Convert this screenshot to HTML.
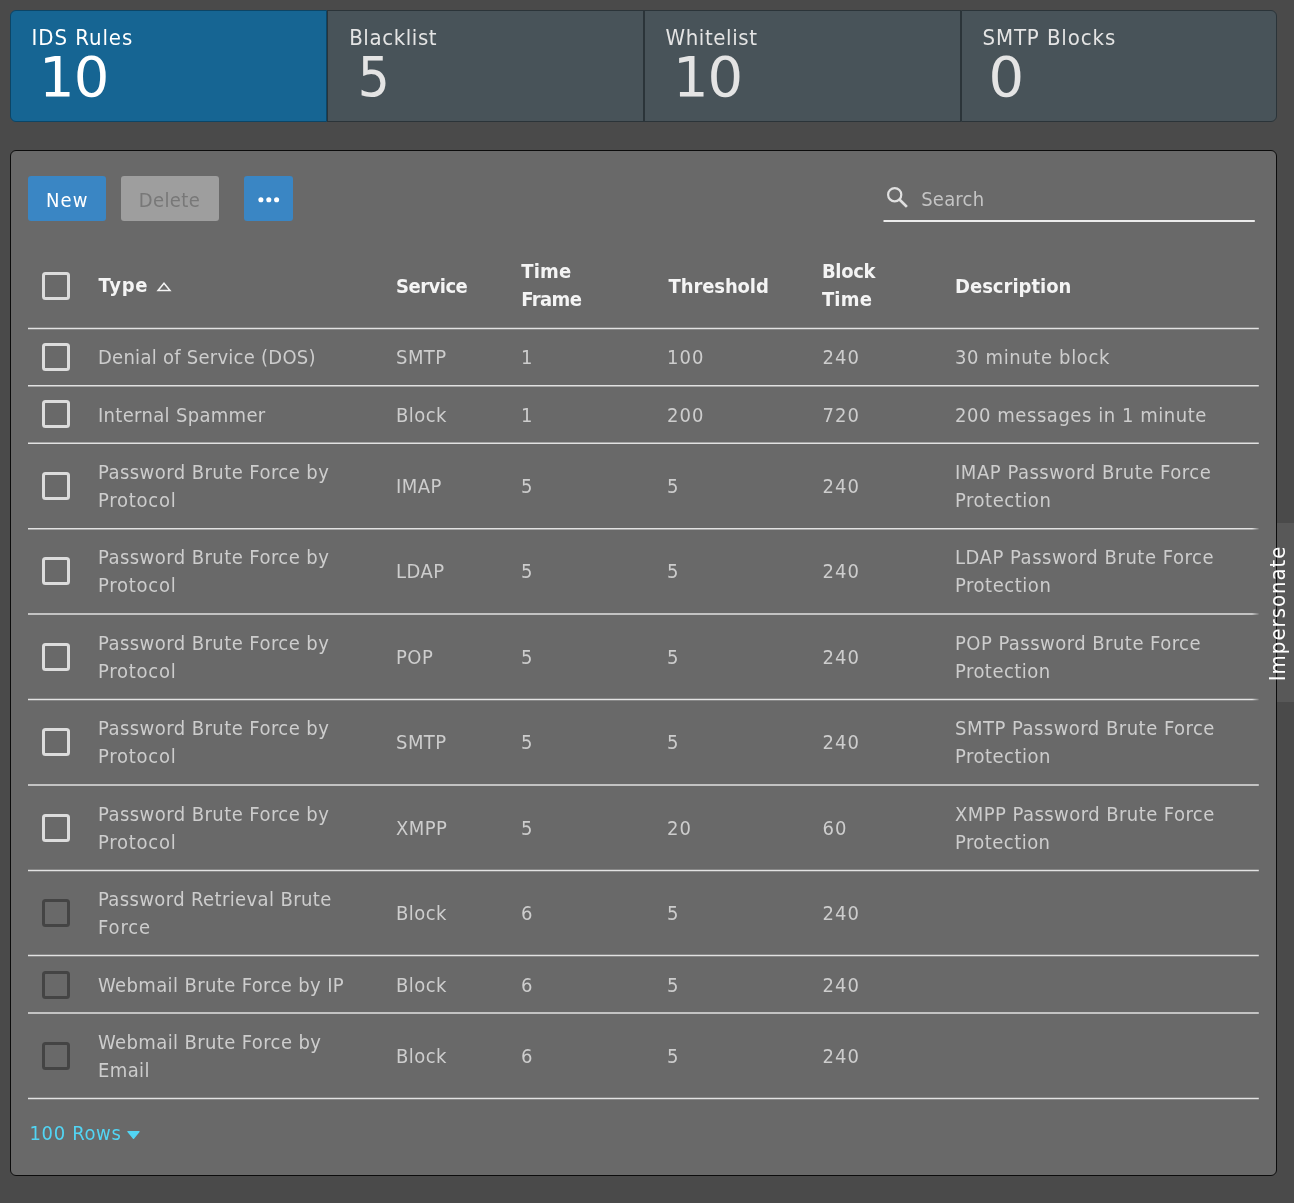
<!DOCTYPE html>
<html lang="en">
<head>
<meta charset="utf-8">
<title>IDS Rules</title>
<style>
*{box-sizing:border-box;margin:0;padding:0}
html,body{width:1294px;height:1203px;overflow:hidden;background:#4a4a4a}
body{position:relative;font-family:"DejaVu Sans Condensed","DejaVu Sans","Liberation Sans",sans-serif;font-size:20px;line-height:28px;color:#c8c8c8;-webkit-font-smoothing:antialiased;will-change:transform}
.abs{position:absolute}
/* cards */
.card{position:absolute;top:10px;height:111.5px;border:1px solid #2b3439;background:#485359;color:#e4e4e4}
.card.sel{background:#166593;border-color:#0c4566;color:#fff}
.card .t{position:absolute;left:20.5px;top:11.6px;font-size:22px;line-height:30px;letter-spacing:.6px;white-space:nowrap}
.card .n{position:absolute;left:28px;top:30.5px;font-family:"DejaVu Sans","Liberation Sans",sans-serif;font-size:56px;line-height:70px;letter-spacing:0;white-space:nowrap}
.c1{left:10px;width:316.5px;border-radius:6px 0 0 6px;border-right-width:1.25px}
.c2{left:326.5px;width:317.8px;border-left-width:1.25px;border-right-width:1.25px}
.c3{left:644.3px;width:316.5px;border-left-width:1.25px;border-right-width:1.25px}
.c4{left:960.8px;width:316.2px;border-left-width:1.25px;border-radius:0 6px 6px 0}
/* panel */
.panel{position:absolute;left:10px;top:150px;width:1267px;height:1026px;background:#696969;border:1.5px solid #0c0c0c;border-radius:6px}
.btn{position:absolute;top:176px;height:45px;border-radius:3px;font-size:20px;line-height:45px;padding-top:2px;text-align:center;white-space:nowrap;letter-spacing:.4px}
.b-new{left:28px;width:77.5px;background:#3a86c4;color:#fff;letter-spacing:1.1px;padding-left:1px}
.b-del{left:120.5px;width:98px;background:#9e9e9e;color:#787878}
.b-more{left:244px;width:48.8px;background:#3a86c4}
.search-txt{position:absolute;left:921.2px;top:184.7px;font-size:20px;line-height:28px;letter-spacing:.22px;color:#c4c4c4}
/* table */
.cb{position:absolute;left:42px;width:28px;height:28px;border:3px solid #dcdcdc;border-radius:3.5px}
.cb.d{border-color:#444}
.th{position:absolute;font-weight:bold;color:#f4f4f4;white-space:nowrap;letter-spacing:.2px}
.td{position:absolute;white-space:nowrap;letter-spacing:.45px;color:#cdcdcd}
.x1{left:98px}.x2{left:396px}.x3{left:521px}.x4{left:667px}.x5{left:822.5px}.x6{left:955px}
.rows{position:absolute;left:29.5px;top:1118.5px;color:#52d5f4;letter-spacing:.65px;white-space:nowrap}
.tab{position:absolute;left:1249px;top:523px;width:45px;height:179px;background:linear-gradient(to right,rgba(105,105,105,0) 3px,rgba(105,105,105,1) 11px,rgba(105,105,105,1) 26.5px,rgba(105,105,105,0) 26.5px,rgba(105,105,105,0) 28.5px,#585858 28.5px)}
.tab span{position:absolute;left:0;top:0;white-space:nowrap;color:#fff;font-size:22px;line-height:28px;letter-spacing:.97px;transform-origin:0 0;transform:translate(14.7px,158.2px) rotate(-90deg)}
</style>
</head>
<body>
<div class="card sel c1"><div class="t" style="letter-spacing:.94px">IDS Rules</div><div class="n" style="letter-spacing:-1px">10</div></div>
<div class="card c2"><div class="t" style="left:21.65px">Blacklist</div><div class="n" style="left:30.25px;font-family:'DejaVu Sans Condensed','DejaVu Sans',sans-serif">5</div></div>
<div class="card c3"><div class="t" style="left:20.25px">Whitelist</div><div class="n" style="left:27.7px;letter-spacing:-1px">10</div></div>
<div class="card c4"><div class="t" style="left:20.65px;letter-spacing:.9px">SMTP Blocks</div><div class="n" style="left:26.75px">0</div></div>

<div class="panel"></div>
<div class="btn b-new">New</div>
<div class="btn b-del">Delete</div>
<div class="btn b-more"><svg style="position:absolute;left:0;top:0" width="49" height="45" viewBox="0 0 49 45"><g fill="#fff"><circle cx="16.9" cy="23.7" r="2.55"/><circle cx="24.8" cy="23.7" r="2.55"/><circle cx="32.6" cy="23.7" r="2.55"/></g></svg></div>

<svg class="abs" style="left:884px;top:184px" width="28" height="28" viewBox="0 0 28 28"><circle cx="10.7" cy="10.7" r="6.6" fill="none" stroke="#e0e0e0" stroke-width="2.2"/><path d="M15.2 15.2 L22.9 22.9" stroke="#e0e0e0" stroke-width="2.7" stroke-linecap="butt"/></svg>
<div class="search-txt">Search</div>

<svg class="abs" style="left:0;top:0" width="1294" height="1203" viewBox="0 0 1294 1203" shape-rendering="geometricPrecision"><g stroke="#e2e2e2" stroke-width="1.5"><line x1="28" x2="1258.8" y1="328.5" y2="328.5"/><line x1="28" x2="1258.8" y1="385.7" y2="385.7"/><line x1="28" x2="1258.8" y1="443.2" y2="443.2"/><line x1="28" x2="1258.8" y1="528.7" y2="528.7"/><line x1="28" x2="1258.8" y1="614.0" y2="614.0"/><line x1="28" x2="1258.8" y1="699.5" y2="699.5"/><line x1="28" x2="1258.8" y1="785.0" y2="785.0"/><line x1="28" x2="1258.8" y1="870.5" y2="870.5"/><line x1="28" x2="1258.8" y1="955.6" y2="955.6"/><line x1="28" x2="1258.8" y1="1013.0" y2="1013.0"/><line x1="28" x2="1258.8" y1="1098.6" y2="1098.6"/><line x1="883.5" x2="1254.8" y1="221" y2="221" stroke="#ececec" stroke-width="1.9"/></g></svg>
<!-- header -->
<div class="cb" style="top:271.7px"></div>
<div class="th x1" style="left:98.6px;top:271px;letter-spacing:0.75px">Type</div>
<svg class="abs" style="left:156px;top:281px" width="16" height="12" viewBox="0 0 16 12"><path d="M8 2.2 L14 9.6 L2 9.6 Z" fill="none" stroke="#f4f4f4" stroke-width="1.5" stroke-linejoin="miter"/></svg>
<div class="th x2" style="top:271.5px;letter-spacing:-0.5px">Service</div>
<div class="th x3" style="left:521.2px;top:257.2px;letter-spacing:-0.55px"><span style="letter-spacing:.2px">Time</span><br>Frame</div>
<div class="th x4" style="left:668.5px;top:271.5px;letter-spacing:-0.1px">Threshold</div>
<div class="th x5" style="left:821.9px;top:257.2px;letter-spacing:-0.3px">Block<br><span style="letter-spacing:.2px">Time</span></div>
<div class="th x6" style="top:271.5px;letter-spacing:0px">Description</div>

<!-- row 1 -->
<div class="cb" style="top:343.2px"></div>
<div class="td x1" style="top:343.4px;letter-spacing:0.26px">Denial of Service (DOS)</div>
<div class="td x2" style="top:343.4px">SMTP</div>
<div class="td x3" style="top:343.4px;letter-spacing:1px">1</div>
<div class="td x4" style="top:343.4px;letter-spacing:1px">100</div>
<div class="td x5" style="top:343.4px;letter-spacing:1px">240</div>
<div class="td x6" style="top:343.4px;letter-spacing:0.63px">30 minute block</div>

<!-- row 2 -->
<div class="cb" style="top:400.4px"></div>
<div class="td x1" style="top:400.6px;letter-spacing:0.32px">Internal Spammer</div>
<div class="td x2" style="top:400.6px">Block</div>
<div class="td x3" style="top:400.6px;letter-spacing:1px">1</div>
<div class="td x4" style="top:400.6px;letter-spacing:1px">200</div>
<div class="td x5" style="top:400.6px;letter-spacing:1px">720</div>
<div class="td x6" style="top:400.6px;letter-spacing:0.55px">200 messages in 1 minute</div>

<!-- row 3 -->
<div class="cb" style="top:471.9px"></div>
<div class="td x1" style="top:457.9px">Password Brute Force by<br><span style="letter-spacing:.76px">Protocol</span></div>
<div class="td x2" style="top:471.9px">IMAP</div>
<div class="td x3" style="top:471.9px;letter-spacing:1px">5</div>
<div class="td x4" style="top:471.9px;letter-spacing:1px">5</div>
<div class="td x5" style="top:471.9px;letter-spacing:1px">240</div>
<div class="td x6" style="top:457.9px;letter-spacing:0.54px">IMAP Password Brute Force<br>Protection</div>

<!-- row 4 -->
<div class="cb" style="top:557.4px"></div>
<div class="td x1" style="top:543.4px">Password Brute Force by<br><span style="letter-spacing:.76px">Protocol</span></div>
<div class="td x2" style="top:557.4px">LDAP</div>
<div class="td x3" style="top:557.4px;letter-spacing:1px">5</div>
<div class="td x4" style="top:557.4px;letter-spacing:1px">5</div>
<div class="td x5" style="top:557.4px;letter-spacing:1px">240</div>
<div class="td x6" style="top:543.4px;letter-spacing:0.54px">LDAP Password Brute Force<br>Protection</div>

<!-- row 5 -->
<div class="cb" style="top:642.9px"></div>
<div class="td x1" style="top:628.9px">Password Brute Force by<br><span style="letter-spacing:.76px">Protocol</span></div>
<div class="td x2" style="top:642.9px">POP</div>
<div class="td x3" style="top:642.9px;letter-spacing:1px">5</div>
<div class="td x4" style="top:642.9px;letter-spacing:1px">5</div>
<div class="td x5" style="top:642.9px;letter-spacing:1px">240</div>
<div class="td x6" style="top:628.9px;letter-spacing:0.47px">POP Password Brute Force<br>Protection</div>

<!-- row 6 -->
<div class="cb" style="top:728.4px"></div>
<div class="td x1" style="top:714.4px">Password Brute Force by<br><span style="letter-spacing:.76px">Protocol</span></div>
<div class="td x2" style="top:728.4px">SMTP</div>
<div class="td x3" style="top:728.4px;letter-spacing:1px">5</div>
<div class="td x4" style="top:728.4px;letter-spacing:1px">5</div>
<div class="td x5" style="top:728.4px;letter-spacing:1px">240</div>
<div class="td x6" style="top:714.4px;letter-spacing:0.49px">SMTP Password Brute Force<br>Protection</div>

<!-- row 7 -->
<div class="cb" style="top:813.9px"></div>
<div class="td x1" style="top:799.9px">Password Brute Force by<br><span style="letter-spacing:.76px">Protocol</span></div>
<div class="td x2" style="top:813.9px">XMPP</div>
<div class="td x3" style="top:813.9px;letter-spacing:1px">5</div>
<div class="td x4" style="top:813.9px;letter-spacing:1px">20</div>
<div class="td x5" style="top:813.9px;letter-spacing:1px">60</div>
<div class="td x6" style="top:799.9px">XMPP Password Brute Force<br>Protection</div>

<!-- row 8 -->
<div class="cb d" style="top:899.3px"></div>
<div class="td x1" style="top:885.3px;letter-spacing:0.38px">Password Retrieval Brute<br><span style="letter-spacing:.9px">Force</span></div>
<div class="td x2" style="top:899.3px">Block</div>
<div class="td x3" style="top:899.3px;letter-spacing:1px">6</div>
<div class="td x4" style="top:899.3px;letter-spacing:1px">5</div>
<div class="td x5" style="top:899.3px;letter-spacing:1px">240</div>

<!-- row 9 -->
<div class="cb d" style="top:970.5px"></div>
<div class="td x1" style="top:970.7px;letter-spacing:0.38px">Webmail Brute Force by IP</div>
<div class="td x2" style="top:970.7px">Block</div>
<div class="td x3" style="top:970.7px;letter-spacing:1px">6</div>
<div class="td x4" style="top:970.7px;letter-spacing:1px">5</div>
<div class="td x5" style="top:970.7px;letter-spacing:1px">240</div>

<!-- row 10 -->
<div class="cb d" style="top:1042px"></div>
<div class="td x1" style="top:1028px;letter-spacing:0.39px">Webmail Brute Force by<br>Email</div>
<div class="td x2" style="top:1042px">Block</div>
<div class="td x3" style="top:1042px;letter-spacing:1px">6</div>
<div class="td x4" style="top:1042px;letter-spacing:1px">5</div>
<div class="td x5" style="top:1042px;letter-spacing:1px">240</div>

<div class="rows">100 Rows</div>
<svg class="abs" style="left:125.6px;top:1129px" width="16" height="12" viewBox="0 0 16 12"><path d="M2 2.6 L13 2.6 L7.5 9.2 Z" fill="#52d5f4" stroke="#52d5f4" stroke-width="1.4" stroke-linejoin="round"/></svg>

<div class="tab"><span>Impersonate</span></div>
</body>
</html>
